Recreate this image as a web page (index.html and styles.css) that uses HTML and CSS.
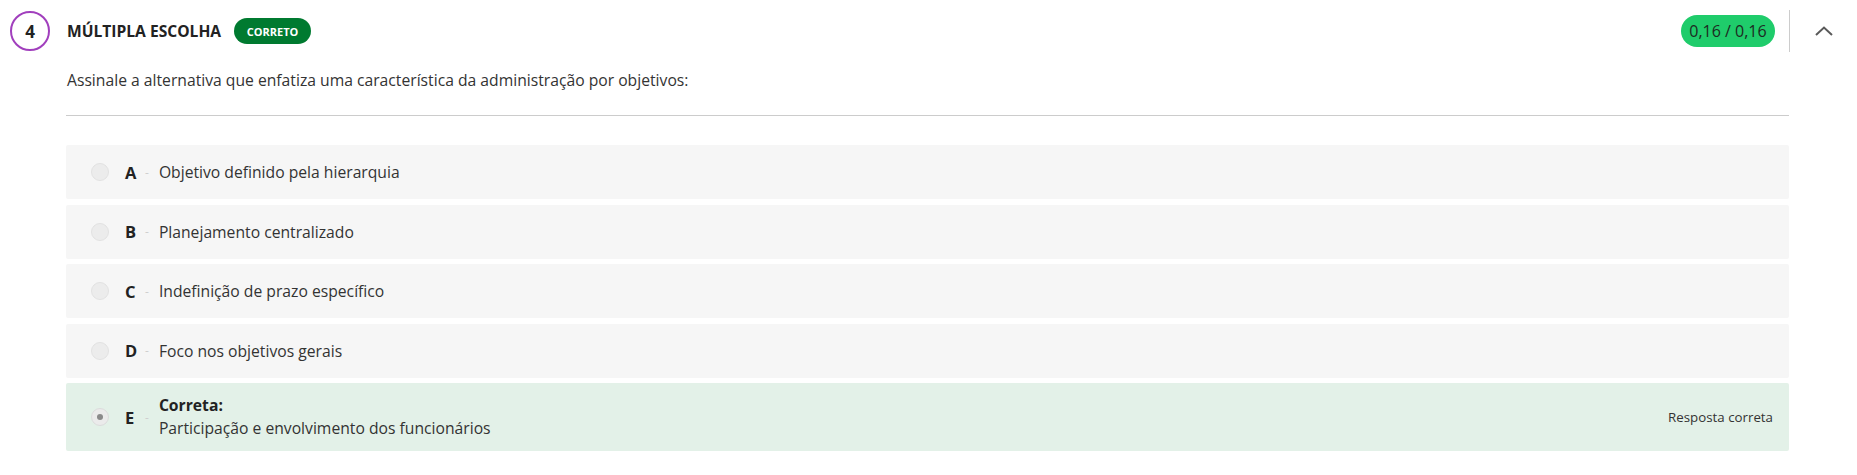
FILE: index.html
```html
<!DOCTYPE html>
<html lang="pt-BR">
<head>
<meta charset="utf-8">
<title>Questão 4</title>
<link rel="stylesheet" href="styles.css">
</head>
<body>
<section class="question">
  <header class="q-header">
    <div class="q-left">
      <div class="q-number">4</div>
      <h2 class="q-type">MÚLTIPLA ESCOLHA</h2>
      <span class="q-badge">CORRETO</span>
    </div>
    <div class="q-right">
      <span class="q-score">0,16 / 0,16</span>
      <span class="q-divider"></span>
      <button class="q-toggle" aria-label="Recolher">
        <svg width="18" height="10" viewBox="0 0 18 10"><path d="M1 9 L9 1.5 L17 9" fill="none" stroke="#5a5a5a" stroke-width="2"/></svg>
      </button>
    </div>
  </header>
  <div class="q-body">
    <p class="q-text">Assinale a alternativa que enfatiza uma característica da administração por objetivos:</p>
    <hr class="q-rule">
    <ul class="options">
      <li class="option">
        <span class="radio"></span>
        <span class="letter">A</span>
        <span class="dash">-</span>
        <span class="opt-text">Objetivo definido pela hierarquia</span>
      </li>
      <li class="option">
        <span class="radio"></span>
        <span class="letter">B</span>
        <span class="dash">-</span>
        <span class="opt-text">Planejamento centralizado</span>
      </li>
      <li class="option">
        <span class="radio"></span>
        <span class="letter">C</span>
        <span class="dash">-</span>
        <span class="opt-text">Indefinição de prazo específico</span>
      </li>
      <li class="option">
        <span class="radio"></span>
        <span class="letter">D</span>
        <span class="dash">-</span>
        <span class="opt-text">Foco nos objetivos gerais</span>
      </li>
      <li class="option option-correct">
        <span class="radio radio-checked"></span>
        <span class="letter">E</span>
        <span class="dash">-</span>
        <span class="opt-text">
          <strong class="opt-label">Correta:</strong>
          <span class="opt-line">Participação e envolvimento dos funcionários</span>
        </span>
        <span class="opt-status">Resposta correta</span>
      </li>
    </ul>
  </div>
</section>
</body>
</html>
```

FILE: styles.css
```css
* { box-sizing: border-box; }
html, body { margin: 0; padding: 0; background: #ffffff; }
body {
  font-family: "Open Sans", "Noto Sans", sans-serif;
  color: #333333;
  font-size: 15.7px;
}
.question { width: 1857px; }
.q-header {
  display: flex;
  align-items: center;
  justify-content: space-between;
  padding: 10px 0 0 10px;
  height: 52px;
}
.q-left { display: flex; align-items: center; }
.q-number {
  width: 40px;
  height: 40px;
  border: 2px solid #a13fbd;
  border-radius: 50%;
  display: flex;
  align-items: center;
  justify-content: center;
  font-weight: 700;
  font-size: 17px;
  color: #222222;
}
.q-type {
  margin: 0 0 0 17px;
  font-size: 15.6px;
  font-weight: 700;
  color: #222222;
}
.q-badge {
  margin-left: 13px;
  height: 26px;
  width: 77px;
  border-radius: 13px;
  background: #007a30;
  color: #ffffff;
  font-size: 11px;
  font-weight: 700;
  display: flex;
  align-items: center;
  justify-content: center;
}
.q-right { display: flex; align-items: center; height: 42px; }
.q-score {
  height: 32px;
  width: 94px;
  border-radius: 16px;
  background: #1fcc6b;
  color: #1d2a22;
  font-size: 16px;
  display: flex;
  align-items: center;
  justify-content: center;
}
.q-divider {
  width: 1px;
  height: 42px;
  background: #cccccc;
  margin-left: 14px;
}
.q-toggle {
  width: 67px;
  height: 42px;
  border: 0;
  background: transparent;
  padding: 0;
  display: flex;
  align-items: center;
  justify-content: center;
}
.q-body { padding: 0 68px 0 66px; }
.q-text {
  margin: 16px 0 0 1px;
  font-size: 15.7px;
  line-height: 24px;
  color: #333333;
}
.q-rule {
  border: 0;
  border-top: 1px solid #cccccc;
  margin: 23px 0 0 0;
}
.options {
  list-style: none;
  margin: 29px 0 0 0;
  padding: 0;
  display: flex;
  flex-direction: column;
  gap: 5.5px;
}
.option {
  display: flex;
  align-items: center;
  height: 54px;
  background: #f6f6f6;
  border-radius: 2px;
  padding: 0 16px 0 25px;
}
.radio {
  width: 18px;
  height: 18px;
  border-radius: 50%;
  background: #ececec;
  border: 1px solid #e2e2e2;
  flex: none;
  display: flex;
  align-items: center;
  justify-content: center;
}
.radio-checked { background: #ebebeb; border-color: #dcdcdc; }
.radio-checked::after {
  content: "";
  width: 6px;
  height: 6px;
  border-radius: 50%;
  background: #8a8a8a;
}
.letter {
  margin-left: 16px;
  width: 12px;
  font-size: 16.5px;
  font-weight: 700;
  color: #222222;
}
.dash {
  margin-left: 8px;
  color: #cfcfcf;
  font-size: 12px;
}
.opt-text {
  margin-left: 10px;
  font-size: 15.7px;
  color: #333333;
  display: flex;
  flex-direction: column;
}
.option-correct {
  height: 68px;
  background: #e3f1e8;
}
.opt-label { font-weight: 700; color: #222222; line-height: 23px; }
.opt-line { line-height: 23px; }
.opt-status {
  margin-left: auto;
  font-size: 13.3px;
  color: #333333;
}
```
